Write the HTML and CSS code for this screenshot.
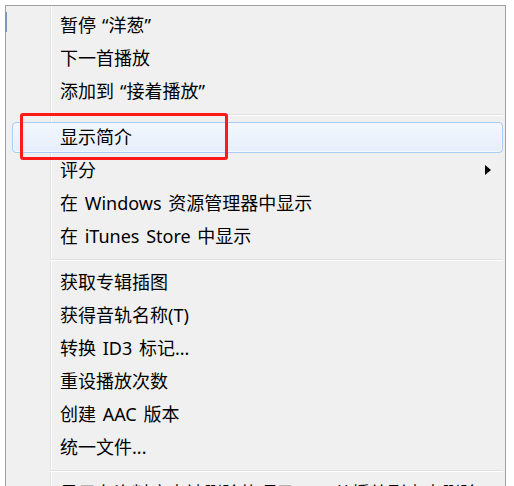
FILE: index.html
```html
<!DOCTYPE html>
<html lang="zh-CN">
<head>
  <meta charset="UTF-8" />
  <title>iTunes 右键菜单</title>
  <link rel="stylesheet" href="styles.css">
</head>
<body>

<div class="menu">
  <span class="edge-tick"></span>
  <ul class="items">
    <li class="item">暂停<span class="q-open">“</span>洋葱<span class="q-close">”</span></li>
    <li class="item">下一首播放</li>
    <li class="item">添加到<span class="q-open">“</span>接着播放<span class="q-close">”</span></li>
    <li class="sep"></li>
    <li class="item active">显示简介</li>
    <li class="item submenu">评分</li>
    <li class="item">在 Windows 资源管理器中显示</li>
    <li class="item">在 iTunes Store 中显示</li>
    <li class="sep"></li>
    <li class="item">获取专辑插图</li>
    <li class="item">获得音轨名称(T)</li>
    <li class="item">转换 ID3 标记...</li>
    <li class="item">重设播放次数</li>
    <li class="item">创建 AAC 版本</li>
    <li class="item">统一文件...</li>
    <li class="sep"></li>
    <li class="item">显示在资料库中被删除的项目      从播放列表中删除</li>
  </ul>
</div>

<div class="callout"></div>

</body>
</html>
```

FILE: styles.css
```css
html, body {
  margin: 0;
  height: 100%;
  overflow: hidden;
  background: #ffffff;
}
body {
  font-family: "Noto Sans", "Noto Sans CJK SC", sans-serif;
  font-size: 18px;
  color: #000;
  position: relative;
}
.menu {
  position: relative;
  margin: 5px 0 0 5px;
  width: 499px;
  height: 600px;
  border: 1px solid #a0a0a0;
  border-bottom: none;
  background-color: #f0f0f0;
  background-image: linear-gradient(to right,
    transparent 44px, #e2e3e3 44px, #e2e3e3 45px,
    #ffffff 45px, #ffffff 46px, transparent 46px);
}
.edge-tick {
  position: absolute;
  left: -1px;
  top: 6px;
  width: 2px;
  height: 20px;
  background: #7f97b3;
}
.items {
  list-style: none;
  margin: 0;
  padding: 3px 0 0 0;
}
.item {
  position: relative;
  height: 33px;
  line-height: 33px;
  padding-left: 54px;
  white-space: pre;
  word-spacing: 2px;
}
.q-open {
  padding-left: 6px;
}
.q-close {
  padding-right: 6px;
}
.item.active {
  height: 29px;
  line-height: 29px;
  margin: 1px 2px 1px 6px;
  padding-left: 47px;
  border: 1px solid #a9ccf2;
  border-radius: 4px;
  background: linear-gradient(#f3f7fd, #e6eefa);
  box-shadow: inset 0 0 0 1px #f4f8fe;
}
.submenu::after {
  content: "";
  position: absolute;
  right: 14px;
  top: 11px;
  border-left: 6px solid #000;
  border-top: 5px solid transparent;
  border-bottom: 5px solid transparent;
}
.sep {
  height: 13px;
  margin-left: 44px;
  margin-right: 2px;
  background: linear-gradient(transparent 6px, #e0e0e0 6px, #e0e0e0 7px,
    #ffffff 7px, #ffffff 8px, transparent 8px);
}
.callout {
  position: absolute;
  left: 20px;
  top: 113px;
  width: 202px;
  height: 41px;
  border: 3px solid #ff1a1a;
  border-radius: 3px;
}
```
